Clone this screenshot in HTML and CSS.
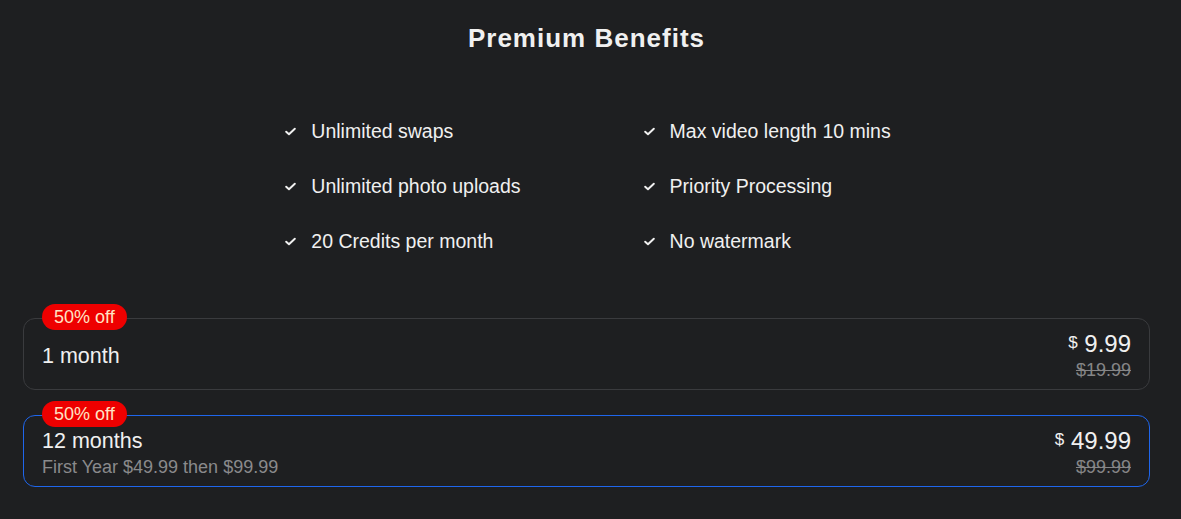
FILE: index.html
```html
<!DOCTYPE html>
<html>
<head>
<meta charset="utf-8">
<link rel="stylesheet" href="styles.css">
</head>
<body>
<div class="page">
  <h1 class="title">Premium Benefits</h1>
  <div class="features">
    <div class="feature"><svg class="check" viewBox="0 0 12 12"><path d="M2 6.2 L4.6 8.6 L10 3.4" fill="none" stroke="#f0f0f0" stroke-width="1.8" stroke-linecap="round" stroke-linejoin="round"/></svg><span>Unlimited swaps</span></div>
    <div class="feature"><svg class="check" viewBox="0 0 12 12"><path d="M2 6.2 L4.6 8.6 L10 3.4" fill="none" stroke="#f0f0f0" stroke-width="1.8" stroke-linecap="round" stroke-linejoin="round"/></svg><span>Max video length 10 mins</span></div>
    <div class="feature"><svg class="check" viewBox="0 0 12 12"><path d="M2 6.2 L4.6 8.6 L10 3.4" fill="none" stroke="#f0f0f0" stroke-width="1.8" stroke-linecap="round" stroke-linejoin="round"/></svg><span>Unlimited photo uploads</span></div>
    <div class="feature"><svg class="check" viewBox="0 0 12 12"><path d="M2 6.2 L4.6 8.6 L10 3.4" fill="none" stroke="#f0f0f0" stroke-width="1.8" stroke-linecap="round" stroke-linejoin="round"/></svg><span>Priority Processing</span></div>
    <div class="feature"><svg class="check" viewBox="0 0 12 12"><path d="M2 6.2 L4.6 8.6 L10 3.4" fill="none" stroke="#f0f0f0" stroke-width="1.8" stroke-linecap="round" stroke-linejoin="round"/></svg><span>20 Credits per month</span></div>
    <div class="feature"><svg class="check" viewBox="0 0 12 12"><path d="M2 6.2 L4.6 8.6 L10 3.4" fill="none" stroke="#f0f0f0" stroke-width="1.8" stroke-linecap="round" stroke-linejoin="round"/></svg><span>No watermark</span></div>
  </div>
  <div class="plans">
    <div class="plan">
      <span class="badge">50% off</span>
      <div class="plan-left">
        <div class="plan-name">1 month</div>
      </div>
      <div class="plan-right">
        <div class="price"><span class="cur">$</span> 9.99</div>
        <div class="old">$19.99</div>
      </div>
    </div>
    <div class="plan selected">
      <span class="badge">50% off</span>
      <div class="plan-left">
        <div class="plan-name">12 months</div>
        <div class="plan-sub">First Year $49.99 then $99.99</div>
      </div>
      <div class="plan-right">
        <div class="price"><span class="cur">$</span> 49.99</div>
        <div class="old">$99.99</div>
      </div>
    </div>
  </div>
</div>
</body>
</html>
```

FILE: styles.css
```css
html, body {
  margin: 0;
  padding: 0;
  background: #1e1f21;
}
body {
  font-family: "Liberation Sans", Arial, sans-serif;
  color: #f0f0f0;
}
.page {
  padding: 22px 31px 0 23px;
}
.title {
  margin: 0;
  text-align: center;
  font-size: 26px;
  font-weight: bold;
  letter-spacing: 1px;
  line-height: 32px;
}
.features {
  display: grid;
  grid-template-columns: auto auto;
  justify-content: center;
  column-gap: 122px;
  row-gap: 31px;
  margin-top: 65px;
  padding-left: 2px;
}
.feature {
  display: flex;
  align-items: center;
  font-size: 19.5px;
  line-height: 24px;
}
.check {
  width: 13px;
  height: 13px;
  margin-right: 14px;
  flex: none;
}
.plans {
  display: flex;
  flex-direction: column;
  gap: 25px;
  margin-top: 65px;
}
.plan {
  position: relative;
  display: flex;
  justify-content: space-between;
  align-items: center;
  border: 1px solid #3a3b3e;
  border-radius: 12px;
  padding: 11px 18px 8px;
}
.plan.selected {
  border-color: #1f66ec;
}
.badge {
  position: absolute;
  left: 18px;
  top: -15px;
  background: #ee0000;
  color: #ffe3c4;
  font-size: 18px;
  line-height: 26px;
  padding: 0 12px;
  border-radius: 13px;
}
.plan-name {
  font-size: 21.5px;
  line-height: 26px;
}
.plan-sub {
  font-size: 18px;
  line-height: 22px;
  color: #8a8a8c;
  margin-top: 2px;
}
.plan-right {
  text-align: right;
}
.price {
  font-size: 24px;
  line-height: 26px;
}
.cur {
  font-size: 17px;
  vertical-align: 4px;
}
.old {
  font-size: 18px;
  line-height: 22px;
  margin-top: 2px;
  color: #858587;
  text-decoration: line-through;
}
```
